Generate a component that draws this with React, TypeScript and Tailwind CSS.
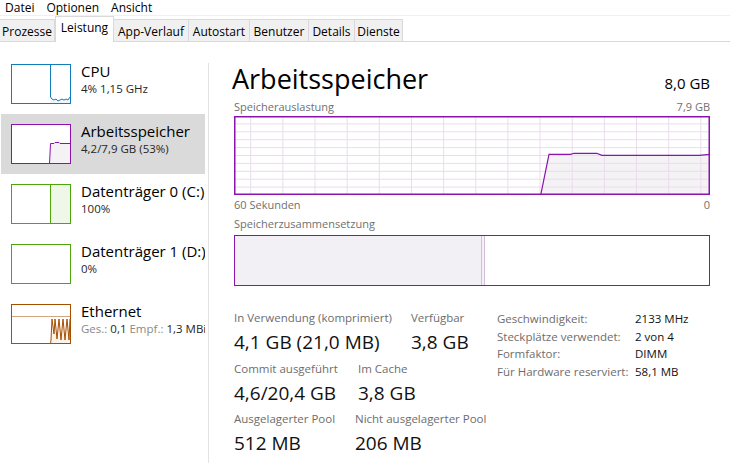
import React from 'react';

const tabs = [
  { label: 'Prozesse', w: 'w-[55px]' },
  { label: 'Leistung', w: 'w-[59px]', active: true },
  { label: 'App-Verlauf', w: 'w-[75px]' },
  { label: 'Autostart', w: 'w-[61px]' },
  { label: 'Benutzer', w: 'w-[59px]' },
  { label: 'Details', w: 'w-[46px]' },
  { label: 'Dienste', w: 'w-[48px]' },
];

type Kind = 'cpu' | 'mem' | 'disk0' | 'disk1' | 'eth';

function Thumb({ kind }: { kind: Kind }) {
  const stroke = {
    cpu: '#117dbb',
    mem: '#8b12ae',
    disk0: '#4da60c',
    disk1: '#4da60c',
    eth: '#a74f01',
  }[kind];
  return (
    <svg width="60" height="40" viewBox="0 0 60 40" className="shrink-0">
      <rect x="0" y="0" width="60" height="40" fill="#fff" />
      {kind === 'cpu' && (
        <>
          <polygon
            points="39.5,40 39.5,33 41,35 43,36 45,35 47,37 49,36 51,35 53,36 55,35 57,36 59,33 59,40"
            fill="#f1f6fa"
          />
          <polyline
            points="39.5,0 39.5,33 41,35 43,36 45,35 47,37 49,36 51,35 53,36 55,35 57,36 59,33"
            fill="none"
            stroke={stroke}
            strokeWidth="1"
          />
        </>
      )}
      {kind === 'mem' && (
        <>
          <polygon points="38.5,40 39.5,19.5 43,19.5 44,18.5 48,18.5 49,19.5 60,19.5 60,40" fill="#f4f2f4" />
          <polyline
            points="38.5,40 39.5,19.5 43,19.5 44,18.5 48,18.5 49,19.5 60,19.5"
            fill="none"
            stroke={stroke}
            strokeWidth="1"
          />
        </>
      )}
      {kind === 'disk0' && (
        <>
          <rect x="39.5" y="0" width="20.5" height="40" fill="#eff7e8" />
          <line x1="39.5" y1="0" x2="39.5" y2="40" stroke={stroke} strokeWidth="1" />
        </>
      )}
      {kind === 'eth' && (
        <>
          <line x1="0" y1="12.5" x2="60" y2="12.5" stroke="#d4a77f" strokeWidth="1" />
          <polygon
            points="39.5,40 40,36 41,15 43,30 44,15 46,35 48,15 50,36 52,15 54,36 56,15 58,36 59,15 59,40"
            fill="#fcf3eb"
          />
          <polyline
            points="39.5,40 40,36 41,15 43,30 44,15 46,35 48,15 50,36 52,15 54,36 56,15 58,36 59,15"
            fill="none"
            stroke={stroke}
            strokeWidth="1"
          />
        </>
      )}
      <rect x="0.5" y="0.5" width="59" height="39" fill="none" stroke={stroke} strokeWidth="1" />
    </svg>
  );
}

function SideItem({
  kind,
  title,
  sub,
  active,
}: {
  kind: Kind;
  title: string;
  sub: React.ReactNode;
  active?: boolean;
}) {
  return (
    <div className={`flex h-[60px] gap-[10px] overflow-hidden pl-[10px] pt-[10px] ${active ? 'bg-[#dadada]' : ''}`}>
      <Thumb kind={kind} />
      <div className="-mt-[3px] flex min-w-0 flex-col whitespace-nowrap">
        <span className="text-[15px] leading-[20px] text-black">{title}</span>
        <span className="text-[11.5px] leading-[16px] text-[#262626]">{sub}</span>
      </div>
    </div>
  );
}

function UsageGraph() {
  const vLines = Array.from({ length: 15 }, (_, i) => 16.7 + i * 32.15);
  const hLines = Array.from({ length: 9 }, (_, i) => (i + 1) * 7.9);
  const pts = '306.7,79 315,38.3 336.7,38.3 340,37.3 362.7,37.3 368,39.3 465,39.3 476,38.3';
  return (
    <svg width="476" height="79" viewBox="0 0 476 79" className="block">
      <rect x="0" y="0" width="476" height="79" fill="#fff" />
      <polygon points={`${pts} 476,79`} fill="#f4f2f4" />
      {vLines.map((x) => (
        <line key={x} x1={x} y1="0" x2={x} y2="79" stroke="#e9dded" strokeWidth="1" />
      ))}
      {hLines.map((y) => (
        <line key={y} x1="0" y1={y} x2="476" y2={y} stroke="#e9dded" strokeWidth="1" />
      ))}
      <polyline points={pts} fill="none" stroke="#8b12ae" strokeWidth="1.2" />
      <rect x="0.75" y="0.75" width="474.5" height="77.5" fill="none" stroke="#8b12ae" strokeWidth="1.5" />
    </svg>
  );
}

function Stat({ label, value, w }: { label: string; value: string; w?: string }) {
  return (
    <div className={`flex flex-col whitespace-nowrap ${w ?? ''}`}>
      <span className="text-[11.5px] leading-[16px] text-[#6d6d6d]">{label}</span>
      <span className="mt-[3px] text-[19px] leading-[26px] text-[#111]">{value}</span>
    </div>
  );
}

const info = [
  ['Geschwindigkeit:', '2133 MHz'],
  ['Steckplätze verwendet:', '2 von 4'],
  ['Formfaktor:', 'DIMM'],
  ['Für Hardware reserviert:', '58,1 MB'],
];

export default function App() {
  return (
    <div className="h-[475px] w-[730px] overflow-hidden bg-white font-['Open_Sans',sans-serif] text-black">
      {/* menu */}
      <div className="flex h-[15px] items-center gap-[12px] pl-[5px] text-[12px] leading-[16px]">
        <span>Datei</span>
        <span>Optionen</span>
        <span>Ansicht</span>
      </div>
      <div className="h-px bg-[#f0f0f0]" />

      {/* tabs */}
      <div className="flex h-[26px] items-end border-b border-[#d9d9d9]">
        {tabs.map((t) =>
          t.active ? (
            <div
              key={t.label}
              className={`${t.w} relative -mb-px flex h-[26px] items-center justify-center border-x border-t border-[#d9d9d9] bg-white pb-[4px] text-[12px]`}
            >
              {t.label}
            </div>
          ) : (
            <div
              key={t.label}
              className={`${t.w} flex h-[22px] items-center justify-center border-r border-t border-[#d9d9d9] bg-[#f0f0f0] pt-[2px] text-[12px]`}
            >
              {t.label}
            </div>
          ),
        )}
      </div>

      <div className="flex">
        {/* sidebar */}
        <div className="flex w-[208px] flex-col pl-[1px] pr-[3px] pt-[12px]">
          <SideItem kind="cpu" title="CPU" sub="4% 1,15 GHz" />
          <SideItem kind="mem" title="Arbeitsspeicher" sub="4,2/7,9 GB (53%)" active />
          <SideItem kind="disk0" title="Datenträger 0 (C:)" sub="100%" />
          <SideItem kind="disk1" title="Datenträger 1 (D:)" sub="0%" />
          <SideItem
            kind="eth"
            title="Ethernet"
            sub={
              <>
                <span className="text-[#8a8a8a]">Ges.: </span>0,1 <span className="text-[#8a8a8a]">Empf.: </span>1,3 MBit/s
              </>
            }
          />
        </div>
        <div className="mt-[21px] h-[400px] w-px bg-[#e3e3e3]" />

        {/* main pane */}
        <div className="flex w-[502px] flex-col pl-[25px] pt-[21px]">
          <div className="flex w-[476px] items-baseline justify-between">
            <span className="-ml-[2px] text-[27px] leading-[32px]">Arbeitsspeicher</span>
            <span className="text-[15px] leading-[20px]">8,0 GB</span>
          </div>
          <div className="mt-[5px] flex h-[14px] w-[476px] justify-between text-[11px] leading-[14px] text-[#707070]">
            <span>Speicherauslastung</span>
            <span>7,9 GB</span>
          </div>
          <div className="mt-[2px]">
            <UsageGraph />
          </div>
          <div className="mt-[3px] flex h-[14px] w-[476px] justify-between text-[11px] leading-[14px] text-[#707070]">
            <span>60 Sekunden</span>
            <span>0</span>
          </div>
          <div className="mt-[5px] h-[14px] text-[11px] leading-[14px] text-[#707070]">Speicherzusammensetzung</div>
          <div className="mt-[4px] flex h-[51px] w-[476px] border border-[#8b12ae]">
            <div className="w-[246px] bg-[#f2f0f4]" />
            <div className="w-[4px] border-x border-[#d3bedd] bg-[#f4f0f6]" />
            <div className="flex-1 bg-white" />
          </div>

          <div className="mt-[24px] flex">
            <div className="flex w-[263px] flex-col">
              <div className="flex">
                <Stat w="w-[177px]" label="In Verwendung (komprimiert)" value="4,1 GB (21,0 MB)" />
                <Stat label="Verfügbar" value="3,8 GB" />
              </div>
              <div className="mt-[6px] flex">
                <Stat w="w-[124px]" label="Commit ausgeführt" value="4,6/20,4 GB" />
                <Stat label="Im Cache" value="3,8 GB" />
              </div>
              <div className="mt-[5px] flex">
                <Stat w="w-[121px]" label="Ausgelagerter Pool" value="512 MB" />
                <Stat label="Nicht ausgelagerter Pool" value="206 MB" />
              </div>
            </div>
            <div className="grid grid-cols-[138px_auto] content-start text-[11.5px] leading-[17.5px] whitespace-nowrap">
              {info.map(([k, v]) => (
                <React.Fragment key={k}>
                  <span className="text-[#6d6d6d]">{k}</span>
                  <span className="text-[#111]">{v}</span>
                </React.Fragment>
              ))}
            </div>
          </div>
        </div>
      </div>
    </div>
  );
}
